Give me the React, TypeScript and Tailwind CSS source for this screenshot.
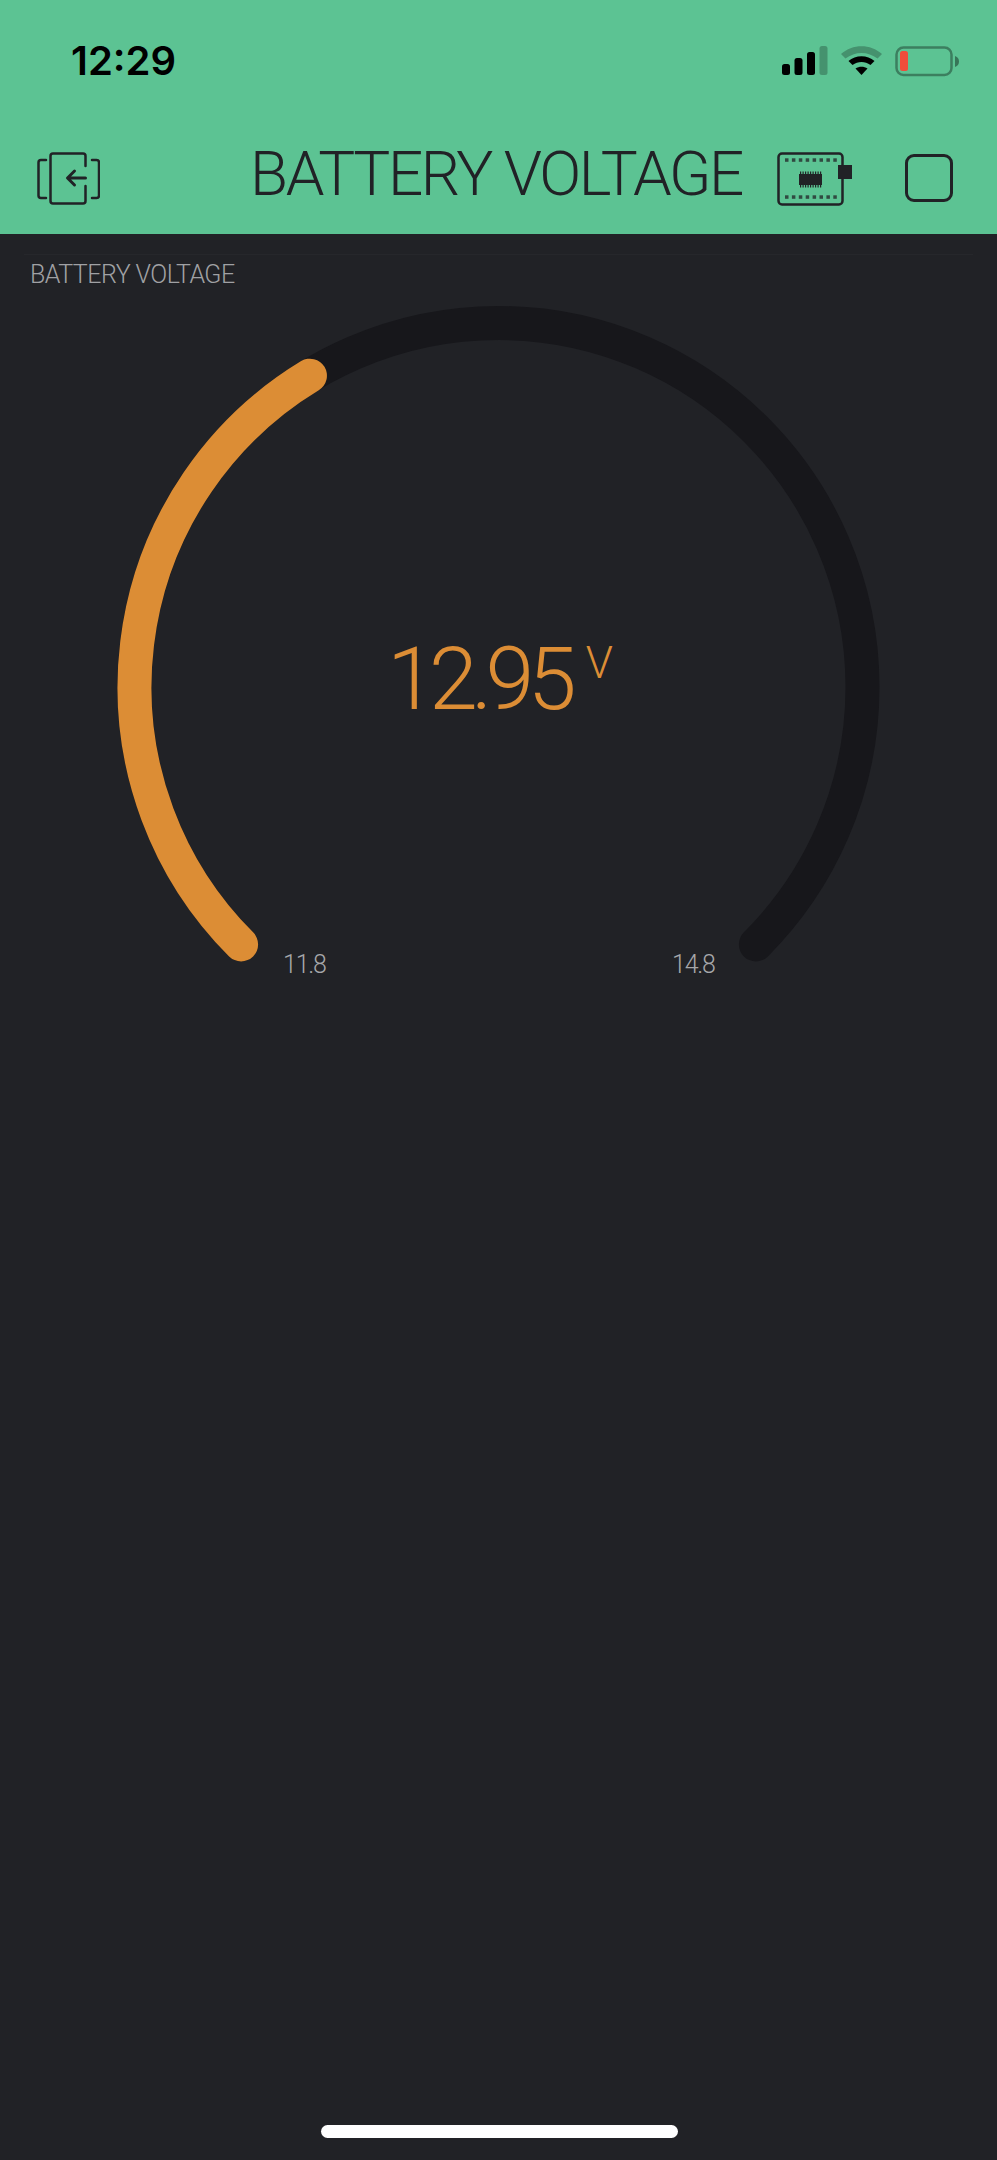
import React from 'react';

const din = 'font-["Roboto",sans-serif]';

function SignalIcon() {
  return (
    <svg width="46" height="30" viewBox="0 0 46 30">
      <rect x="0" y="18" width="8" height="11" rx="2.500" fill="#000" />
      <rect x="12.500" y="12" width="8" height="17" rx="2.500" fill="#000" />
      <rect x="25" y="6" width="8" height="23" rx="2.500" fill="#000" />
      <rect x="37.500" y="0" width="8" height="29" rx="2.500" fill="#000" fillOpacity="0.25" />
    </svg>
  );
}

function WifiIcon() {
  return (
    <svg width="41" height="30" viewBox="0 0 41 30">
      <path d="M0 8C11.500 -2.500 29.500 -2.500 41 8L36.500 12.500C27 5 14 5 4.500 12.500Z" fill="#000" fillOpacity="0.25" />
      <path d="M7.500 15C14.500 8.500 26.500 8.500 33.500 15L29.500 19C24 15 17 15 11.500 19Z" fill="#000" />
      <path d="M14.500 22.500C18 20.300 23 20.300 26.500 22.500L20.500 29Z" fill="#000" />
    </svg>
  );
}

function BatteryIcon() {
  return (
    <svg width="64" height="31" viewBox="0 0 64 31">
      <rect x="1.500" y="1.500" width="55" height="27.500" rx="7" fill="none" stroke="#000" strokeOpacity="0.35" strokeWidth="2.500" />
      <rect x="5" y="5" width="8" height="20" rx="2.500" fill="#f04d3b" />
      <path d="M60 10C63 11 64 13 64 15.500C64 18 63 20 60 21Z" fill="#000" fillOpacity="0.4" />
    </svg>
  );
}

function BackIcon() {
  return (
    <svg width="63" height="54" viewBox="0 0 63 54" fill="none" stroke="#212226" strokeWidth="2.500" strokeLinecap="round" strokeLinejoin="round">
      <path d="M9 8H4C2.500 8 1.500 9 1.500 10.500V43.500C1.500 45 2.500 46 4 46H9" />
      <path d="M55 8H59.500C61 8 62 9 62 10.500V43.500C62 45 61 46 59.500 46H55" />
      <path d="M48.500 14V4C48.500 2.500 47.500 1.500 46 1.500H16C14.500 1.500 13.500 2.500 13.500 4V49C13.500 50.500 14.500 51.500 16 51.500H46C47.500 51.500 48.500 50.500 48.500 49V34" />
      <path d="M48.500 26H31M37.500 19L30.500 26L37.500 33" strokeWidth="3" />
    </svg>
  );
}

function BoardIcon() {
  const dots = [0, 1, 2, 3, 4, 5, 6, 7];
  const pins = [0, 1, 2, 3, 4, 5, 6, 7, 8];
  return (
    <svg width="75" height="54" viewBox="0 0 75 54">
      <rect x="1.500" y="1.500" width="64" height="51" rx="3.500" fill="none" stroke="#212226" strokeWidth="2.500" />
      {dots.map((i) => (
        <rect key={`t${i}`} x={8 + i * 6.900} y="6.300" width="3.500" height="3.500" fill="#212226" fillOpacity="0.75" />
      ))}
      {dots.map((i) => (
        <rect key={`b${i}`} x={8 + i * 6.900} y="43.300" width="3.500" height="3.500" fill="#212226" fillOpacity="0.75" />
      ))}
      <rect x="22" y="22" width="23" height="11" fill="#212226" />
      {pins.map((i) => (
        <g key={`p${i}`}>
          <rect x={23 + i * 2.500} y="19.500" width="1.200" height="2.500" fill="#212226" />
          <rect x={23 + i * 2.500} y="33" width="1.200" height="2.500" fill="#212226" />
        </g>
      ))}
      <rect x="61" y="13" width="14" height="14" fill="#212226" />
    </svg>
  );
}

// gauge geometry measured off the screenshot
const cx = 498.5;
const cy = 687;
const r = 364;

function point(deg: number) {
  const a = (deg * Math.PI) / 180;
  return `${cx + r * Math.cos(a)} ${cy + r * Math.sin(a)}`;
}

function Gauge() {
  const track = `M ${point(135)} A ${r} ${r} 0 1 1 ${point(45)}`;
  const value = `M ${point(135)} A ${r} ${r} 0 0 1 ${point(238.8)}`;
  return (
    <svg width="997" height="760" viewBox="0 290 997 760" className="block">
      <path d={track} fill="none" stroke="#17171b" strokeWidth="34" strokeLinecap="round" />
      <path d={value} fill="none" stroke="#dc8d35" strokeWidth="34" strokeLinecap="round" />
    </svg>
  );
}

export default function App() {
  return (
    <div className={`relative flex flex-col w-[997px] h-[2160px] bg-[#212226] overflow-hidden ${din}`}>
      {/* Status bar + header */}
      <div className="flex flex-col h-[234px] bg-[#5cc393] shrink-0">
        <div className="flex items-center justify-between h-[122px] pl-[71px] pr-[38px]">
          <span className='text-[40px] leading-none font-semibold text-black font-["Inter",sans-serif]'>12:29</span>
          <div className="flex items-center gap-[13px]">
            <SignalIcon />
            <WifiIcon />
            <BatteryIcon />
          </div>
        </div>
        <div className="grid grid-cols-[1fr_auto_1fr] items-start pl-[37px] pr-[44px] pt-[30px]">
          <BackIcon />
          <h1 className="text-[62px] leading-[58px] font-[350] text-[#212226] whitespace-nowrap tracking-[-2.4px] -mt-[7px] ml-[2px]">BATTERY VOLTAGE</h1>
          <div className="flex items-start justify-end gap-[53px]">
            <BoardIcon />
            <div className="w-[48px] h-[48px] mt-[2px] rounded-[9px] border-[3px] border-[#212226]" />
          </div>
        </div>
      </div>

      {/* Widget */}
      <div className="relative flex-1">
        <div className="mx-[24px] mt-[20px] h-px bg-[#26272b]" />
        <p className="pl-[30px] pt-[5px] text-[25px] leading-[30px] font-[350] text-[#a0a1a4] tracking-[-0.55px]">BATTERY VOLTAGE</p>
        <Gauge />
        <div className="absolute left-[387px] top-[401px] flex items-start text-[#dc8d35] font-[350]">
          <span className="text-[88px] leading-[88px] tracking-[-6.7px]">12.95</span>
          <span className="text-[44px] leading-[44px] ml-[16px] mt-[6px]">V</span>
        </div>
        <span className="absolute left-[283px] top-[716px] text-[25px] leading-[30px] font-[350] text-[#a6a7aa] tracking-[-1.2px]">11.8</span>
        <span className="absolute left-[672px] top-[716px] text-[25px] leading-[30px] font-[350] text-[#a6a7aa] tracking-[-1.2px]">14.8</span>
      </div>

      {/* Home indicator */}
      <div className="absolute bottom-[22px] left-[321px] w-[357px] h-[13px] rounded-full bg-white" />
    </div>
  );
}
